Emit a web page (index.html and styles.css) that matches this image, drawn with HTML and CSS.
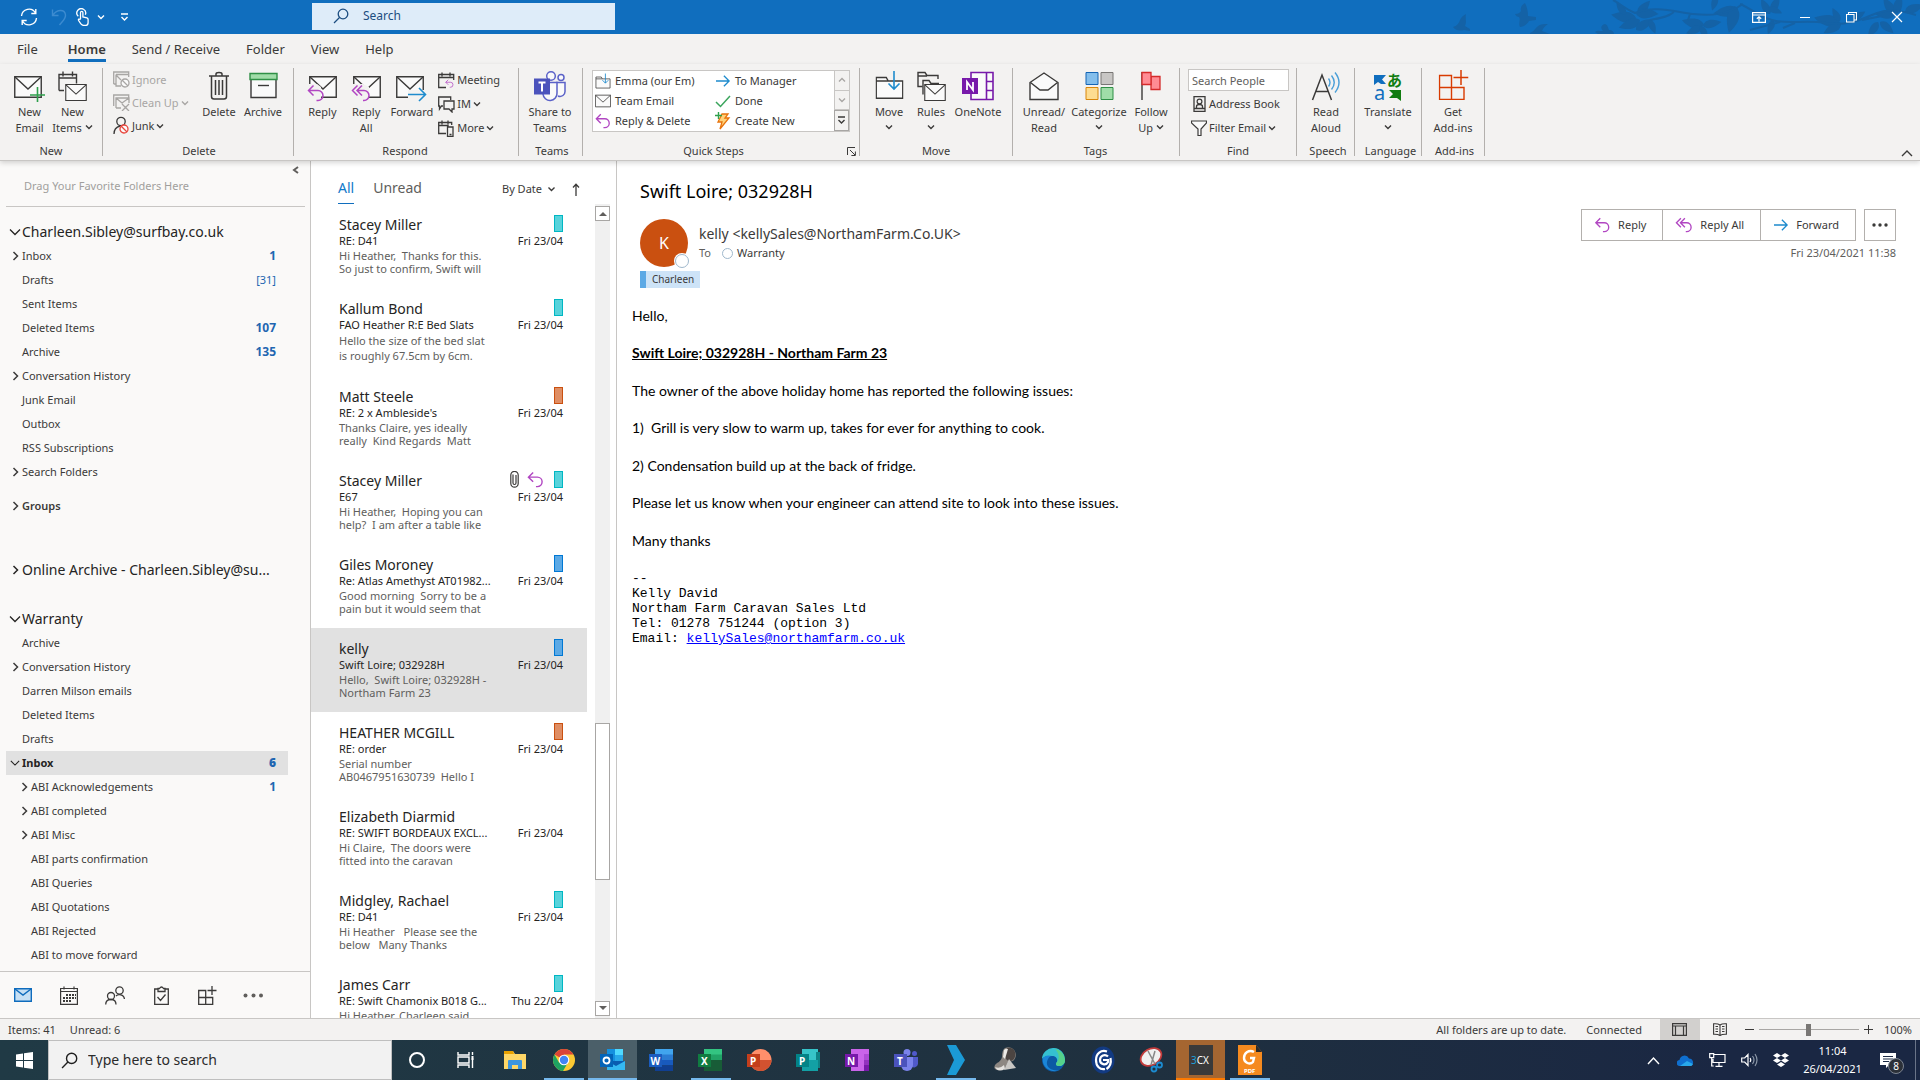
FILE: index.html
```html
<!DOCTYPE html>
<html lang="en">
<head>
<meta charset="utf-8">
<title>Warranty - Inbox</title>
<link rel="stylesheet" href="styles.css">
</head>
<body>
<svg class="defs" aria-hidden="true">
  <symbol id="down" viewBox="0 0 8 6"><path d="M1 1.5l3 3 3-3" fill="none" stroke="currentColor" stroke-width="1.4"/></symbol>
  <symbol id="right" viewBox="0 0 8 12"><path d="M1.5 2l4 4-4 4" fill="none" stroke="currentColor" stroke-width="1.5"/></symbol>
  <symbol id="open" viewBox="0 0 12 12"><path d="M1 3.5l5 5 5-5" fill="none" stroke="currentColor" stroke-width="1.3"/></symbol>
  <symbol id="reply" viewBox="0 0 18 18"><path d="M6.500 1.500l-5 5 5 5M1.500 6.500h9.500a5 5 0 0 1 0 10h-1.500" fill="none" stroke="#b146c2" stroke-width="1.5"/></symbol>
  <symbol id="replyall" viewBox="0 0 20 18"><path d="M6.500 1.500l-5 5 5 5M11 1.500l-5 5 5 5M6 6.500h7a5 5 0 0 1 0 10h-1" fill="none" stroke="#b146c2" stroke-width="1.5"/></symbol>
  <symbol id="fwd" viewBox="0 0 18 16"><path d="M1 8h15M10 2l6 6-6 6" fill="none" stroke="#1e8bcd" stroke-width="1.5"/></symbol>
  <symbol id="mag" viewBox="0 0 16 16"><path d="M1 15l5.500-5.500" fill="none" stroke="currentColor" stroke-width="1.3"/><circle cx="10" cy="6" r="4.800" fill="none" stroke="currentColor" stroke-width="1.300"/></symbol>
  <symbol id="folderdown" viewBox="0 0 28 30"><path d="M.75 28.250V7.500h10l2 3.500h14.500v17.250zM.75 11h12" fill="#fafafa" stroke="#3b3a39" stroke-width="1.400"/><path d="M18.500 1v18M13 13.500l5.500 5.500 5.500-5.500" fill="none" stroke="#1e8bcd" stroke-width="1.600"/></symbol>
  <symbol id="env" viewBox="0 0 28 22"><path d="M.75.75h26.500v20.500H.75z" fill="#fafafa" stroke="#3b3a39" stroke-width="1.400"/><path d="M1 1l13 12L27 1" fill="none" stroke="#3b3a39" stroke-width="1.400"/></symbol>
  <symbol id="no" viewBox="0 0 10 10"><circle cx="5" cy="5" r="4" fill="#fafafa" stroke="currentColor" stroke-width="1.300"/><path d="M2 2l6 6" stroke="currentColor" stroke-width="1.300"/></symbol>
  <symbol id="addins" viewBox="0 0 30 30"><path d="M1 5.500h12v24H1zM1 17.500h24.500v12H13v-12" fill="none" stroke="currentColor" stroke-width="1.400"/><path d="M22.500 0v15M15 7.500h15" stroke="currentColor" stroke-width="1.500"/></symbol>
  <defs><path id="leaf" d="M0 0C4-8 14-8 25 0 14 6 5 7 0 0z"/></defs>
</svg>

<header class="titlebar">
  <svg class="art" viewBox="0 0 470 34" aria-hidden="true">
    <path d="M3 27c4-1 6-4 7-7 1-3 4-5 6-6-1 4 1 8-1 12l5 3v2l-6-1c-4 1-8 1-11-3zM65 14c3 0 5-1 6-3-1-4 1-6 4-8 2 4 3 8 3 13l8 1v3l-7 1c-2 3-5 6-9 6-2-4 1-7-1-10-2 0-3-1-4-3zM80 33c3-1 4-3 6-5 3-4 7-4 12-4-3 2-5 4-6 7l8 3H80zM145 32c2-2 5-1 8-1-3-3-2-6 2-7 3 1 3 4 4 6 3 0 5 2 5 4h-16z"/>
    <use href="#leaf" transform="translate(186 18) rotate(188)"/>
    <use href="#leaf" transform="translate(190 20) rotate(160) scale(.9)"/>
    <use href="#leaf" transform="translate(176 14) rotate(230) scale(.6)"/>
    <use href="#leaf" transform="translate(188 15) rotate(-50) scale(.75)"/>
    <use href="#leaf" transform="translate(186 14) rotate(0) scale(.9)"/>
    <use href="#leaf" transform="translate(186 30) rotate(-32) scale(.8)"/>
    <use href="#leaf" transform="translate(199 20) rotate(65) scale(.6)"/>
    <use href="#leaf" transform="translate(254 25) rotate(192) scale(.9)"/>
    <use href="#leaf" transform="translate(252 26) rotate(155) scale(.7)"/>
    <use href="#leaf" transform="translate(250 26) rotate(60) scale(.6)"/>
    <use href="#leaf" transform="translate(253 26) rotate(-12) scale(.75)"/>
    <use href="#leaf" transform="translate(266 -4) rotate(105) scale(.6)"/>
    <use href="#leaf" transform="translate(288 9) rotate(170)"/>
    <use href="#leaf" transform="translate(285 6) rotate(103) scale(1.100)"/>
    <use href="#leaf" transform="translate(320 14) rotate(240) scale(.7)"/>
    <use href="#leaf" transform="translate(322 12) rotate(-65) scale(.7)"/>
    <use href="#leaf" transform="translate(318 8) rotate(20) scale(.6)"/>
    <use href="#leaf" transform="translate(323 20) rotate(110) scale(.6)"/>
    <use href="#leaf" transform="translate(390 22) rotate(190) scale(1.050)"/>
    <use href="#leaf" transform="translate(390 21) rotate(240) scale(.6)"/>
    <use href="#leaf" transform="translate(391 23) rotate(150) scale(.8)"/>
    <use href="#leaf" transform="translate(403 20) rotate(-35) scale(.6)"/>
    <use href="#leaf" transform="translate(428 22) rotate(125) scale(.7)"/>
    <use href="#leaf" transform="translate(430 22) rotate(40) scale(.7)"/>
    <use href="#leaf" transform="translate(445 14) rotate(235) scale(.8)"/>
    <use href="#leaf" transform="translate(446 14) rotate(-75) scale(.8)"/>
    <use href="#leaf" transform="translate(445 14) rotate(180) scale(.8)"/>
    <use href="#leaf" transform="translate(455 12) rotate(-20) scale(.8)"/>
    <path d="M163 0c8 4 12 9 22 13 20-8 40-1 58 1s34 1 50-10M240 14l-2 6M200 20c10-2 18-3 24-8M252 27v7M290 4c14 6 20 14 36 17s31-1 50 2 32-2 46-8 24-6 44 0M330 22l-30 8M345 23l-12 5M412 20l20-4" fill="none" stroke-width="2"/>
  </svg>
  <nav class="quick" aria-label="Quick access">
    <button class="q-sync" aria-label="Send and receive"><svg width="18" height="18" viewBox="0 0 18 18"><path d="M1.500 8a7.500 7.500 0 0 1 14-3M16.500 10a7.500 7.500 0 0 1-14 3M15.800 1v4.500h-4.500M2.200 17v-4.500h4.500" fill="none" stroke="#fff" stroke-width="1.400"/></svg></button>
    <button class="q-undo" aria-label="Undo"><svg width="16" height="18" viewBox="0 0 16 18"><path d="M1.500 1.500v6h6M2 7c4-6 12-6 12.500 0 .3 4-3 6-6 10" fill="none" stroke="#3c8bd0" stroke-width="1.400"/></svg></button>
    <button class="q-touch" aria-label="Touch mode"><svg width="13" height="18" viewBox="0 0 13 18"><path d="M4.500 11V4.500a1.200 1.200 0 0 1 2.400 0V9l4 .8c1 .3 1.200 1 1.200 1.800v2.800c0 1.500-1 3-2.500 3H7.500c-1.500 0-2-.6-2.800-1.700L2.600 12.500c-.7-1.300.7-2 1.900-.6M2.300 8.300A4.400 4.400 0 1 1 9.300 6.800" fill="none" stroke="#fff" stroke-width="1.300"/></svg></button>
    <button class="q-chev" aria-label="Touch options"><svg width="8" height="6"><use href="#down"/></svg></button>
    <button class="q-more" aria-label="Customise toolbar"><svg width="9" height="9" viewBox="0 0 9 9"><path d="M1 1h7M1.500 4l3 3 3-3" fill="none" stroke="#fff" stroke-width="1.400"/></svg></button>
  </nav>
  <label class="topsearch"><svg width="16" height="16"><use href="#mag"/></svg><input type="search" placeholder="Search" aria-label="Search"></label>
  <div class="winbtns">
    <button aria-label="Ribbon display"><svg width="14" height="11" viewBox="0 0 14 11"><path d="M.6.600h12.800v9.800H.6zM.6 3h12.800M7 9.500V4.800M4.800 6.800L7 4.800l2.200 2" fill="none" stroke="#fff" stroke-width="1.200"/></svg></button>
    <button aria-label="Minimise"><svg width="10" height="10" viewBox="0 0 10 10"><path d="M0 5.500h10" stroke="#fff"/></svg></button>
    <button aria-label="Restore"><svg width="11" height="11" viewBox="0 0 11 11"><path d="M.5 2.500h7.500v7.500H.5zM2.500 2.500v-2h8v7.500H8" fill="none" stroke="#fff" stroke-width="1.100"/></svg></button>
    <button aria-label="Close"><svg width="12" height="12" viewBox="0 0 12 12"><path d="M1 1l10 10M11 1L1 11" stroke="#fff" stroke-width="1.200"/></svg></button>
  </div>
</header>

<nav class="tabs" aria-label="Ribbon tabs">
  <a href="#">File</a><a href="#" class="on">Home</a><a href="#">Send / Receive</a><a href="#">Folder</a><a href="#">View</a><a href="#">Help</a>
</nav>

<div class="ribbon">
  <section class="group g-new"><div class="tools">
    <button class="big w43"><svg width="31" height="34" viewBox="0 0 31 34"><use href="#env" x="0" y="5" width="28" height="24"/><path d="M23.500 17v15M16 25h15" stroke="#2ea04c" stroke-width="1.600"/></svg><span>New<br>Email</span></button>
    <button class="big w43"><svg width="29" height="34" viewBox="0 0 29 34"><path d="M1 20.500V4.500h17.500v9M1 8h17M5 1.500v5M14.500 1.500v5M1 20.500h5" fill="none" stroke="#3b3a39" stroke-width="1.400"/><use href="#env" x="7" y="14" width="22" height="17"/></svg><span>New<br>Items <svg width="8" height="6"><use href="#down"/></svg></span></button>
  </div><h2>New</h2></section>

  <section class="group g-delete"><div class="tools">
    <div class="stack">
      <button class="small off"><svg width="17" height="17" viewBox="0 0 17 17"><path d="M.7 13V1h15v5M.7 13h3M3 3.500h12M3 3.500V15h5M3 4l5 5" fill="none" stroke="#a8a6a4" stroke-width="1.300"/><use href="#no" x="7" y="7" width="10" height="10"/></svg>Ignore</button>
      <button class="small off"><svg width="17" height="17" viewBox="0 0 17 17"><path d="M.7 12V1h15v3M3 14V4h13v5M3 4l6 5 7-5M3 14h5M9 10l7 7M16 10l-7 7" fill="none" stroke="#a8a6a4" stroke-width="1.300"/></svg>Clean Up <svg width="8" height="6"><use href="#down"/></svg></button>
      <button class="small"><svg width="17" height="19" viewBox="0 0 17 19"><circle cx="8" cy="5.500" r="4.200" fill="none" stroke="#3b3a39" stroke-width="1.300"/><path d="M1 18c0-5 2-7 6-8" fill="none" stroke="#3b3a39" stroke-width="1.300"/><use href="#no" x="6" y="8" width="10" height="10" color="#e8453c"/></svg>Junk <svg width="8" height="6"><use href="#down"/></svg></button>
    </div>
    <button class="big w44"><svg width="22" height="34" viewBox="0 0 22 34"><path d="M1 6h20M3.500 6v20.500q0 2.500 2.500 2.500h10q2.500 0 2.500-2.500V6M8 6V4q0-1.500 3-1.500T14 4v2M7.500 10v15M11 10v15M14.500 10v15" fill="none" stroke="#3b3a39" stroke-width="1.500"/></svg><span>Delete</span></button>
    <button class="big w44"><svg width="29" height="34" viewBox="0 0 29 34"><path d="M2 9h25v18.500H2z" fill="#fafafa" stroke="#3b3a39" stroke-width="1.400"/><path d="M1 3.500h27v6H1z" fill="#a0dca8" stroke="#2f8f46" stroke-width="1.400"/><path d="M9 15.500h11" stroke="#3b3a39" stroke-width="1.400"/></svg><span>Archive</span></button>
  </div><h2>Delete</h2></section>

  <section class="group g-respond"><div class="tools">
    <button class="big w46"><svg width="31" height="34" viewBox="0 0 31 34"><use href="#env" x="2" y="5" width="28" height="24"/><path d="M0 14h10l4 3v12H0z" fill="#f3f2f1"/><use href="#reply" x="0" y="14" width="18" height="18"/></svg><span>Reply</span></button>
    <button class="big w44"><svg width="31" height="34" viewBox="0 0 31 34"><use href="#env" x="2" y="5" width="28" height="24"/><path d="M0 14h12l6 3v12H0z" fill="#f3f2f1"/><use href="#replyall" x="0" y="14" width="20" height="18"/></svg><span>Reply<br>All</span></button>
    <button class="big w50"><svg width="31" height="34" viewBox="0 0 31 34"><use href="#env" x="0" y="5" width="28" height="24"/><path d="M12 20h18v10H12z" fill="#f3f2f1"/><path d="M12 24.500h17M23 18l6.500 6.500L23 31" fill="none" stroke="#1e8bcd" stroke-width="1.600"/></svg><span>Forward</span></button>
    <div class="stack loose">
      <button class="small"><svg width="17" height="17" viewBox="0 0 17 17"><path d="M8 15.500H.7V2.500h15V8M.7 5.500h15M4 .5v4M12 .5v4" fill="none" stroke="#3b3a39" stroke-width="1.300"/><use href="#reply" x="7" y="7" width="9" height="9"/></svg>Meeting</button>
      <button class="small"><svg width="17" height="17" viewBox="0 0 17 17"><path d="M5 10H3.500L1.500 13v-3H.7V1h12v3M6 5h10v8h-2v3l-3-3H6z" fill="none" stroke="#3b3a39" stroke-width="1.300"/></svg>IM <svg width="8" height="6"><use href="#down"/></svg></button>
      <button class="small"><svg width="17" height="17" viewBox="0 0 17 17"><path d="M8 13.500H.7V2.500h13V5M.7 5.500h10M4 .5v4M10 .5v4M9.500 7h5.500v9.500H9.500zM11.500 14.500h2" fill="none" stroke="#3b3a39" stroke-width="1.300"/></svg>More <svg width="8" height="6"><use href="#down"/></svg></button>
    </div>
  </div><h2>Respond</h2></section>

  <section class="group g-teams"><div class="tools">
    <button class="big w56"><svg width="32" height="34" viewBox="0 0 32 34"><g fill="#fafafa" stroke="#5b62c8" stroke-width="1.500"><path d="M22 12.500h9V21a5 5 0 0 1-7 5"/><path d="M9 12.500h14V23a7 7 0 0 1-14 1z"/><circle cx="17" cy="6" r="4.300"/><circle cx="27" cy="7.500" r="3"/></g><path d="M0 8.500h16v16H0z" fill="#4b53bc"/><path d="M4.500 12.500h7M8 12.500v9" stroke="#fff" stroke-width="2"/></svg><span>Share to<br>Teams</span></button>
  </div><h2>Teams</h2></section>

  <section class="group g-quick"><div class="tools">
    <div class="gallery">
      <div class="steps">
        <button><svg width="16" height="16"><use href="#folderdown"/></svg>Emma (our Em)</button>
        <button><svg width="16" height="14"><use href="#fwd"/></svg>To Manager</button>
        <button><svg width="16" height="14"><use href="#env"/></svg>Team Email</button>
        <button><svg width="16" height="14" viewBox="0 0 16 14"><path d="M1 8l4.500 4.500L15 2" fill="none" stroke="#3ba55d" stroke-width="1.500"/></svg>Done</button>
        <button><svg width="16" height="16"><use href="#reply"/></svg>Reply &amp; Delete</button>
        <button><svg width="16" height="18" viewBox="0 0 16 18"><path d="M7 2h6l-3 4h4L5 17l2-7H3z" fill="#ffd27a" stroke="#e8730c" stroke-width="1.300"/><path d="M3.500 0v7M0 3.500h7" stroke="#2ea04c" stroke-width="1.400"/></svg>Create New</button>
      </div>
      <div class="spin"><button aria-label="Previous row"><svg class="flip" width="8" height="6"><use href="#down"/></svg></button><button aria-label="Next row"><svg width="8" height="6"><use href="#down"/></svg></button><button class="strong" aria-label="More quick steps"><svg width="9" height="9" viewBox="0 0 9 9"><path d="M1 1h7M1.500 4l3 3 3-3" fill="none" stroke="currentColor" stroke-width="1.400"/></svg></button></div>
    </div>
  </div><h2>Quick Steps</h2><button class="launcher" aria-label="Manage quick steps"><svg width="9" height="9" viewBox="0 0 9 9"><path d="M.5 8V.5H8M3 3l5 5M8.400 4.500v4h-4" fill="none" stroke="#3b3a39"/></svg></button></section>

  <section class="group g-move"><div class="tools">
    <button class="big w42"><svg width="29" height="34" viewBox="0 0 28 34"><use href="#folderdown" x="0" y="0" width="28" height="30"/></svg><span>Move<br><svg width="8" height="6"><use href="#down"/></svg></span></button>
    <button class="big w42"><svg width="29" height="34" viewBox="0 0 29 34"><path d="M5.500 16.500H1V2.500h7l2 3h11V9M1 6h9" fill="none" stroke="#3b3a39" stroke-width="1.400"/><path d="M6 24.500V10.500h6l2 3h8" fill="none" stroke="#3b3a39" stroke-width="1.400"/><use href="#env" x="7" y="14" width="22" height="17"/></svg><span>Rules<br><svg width="8" height="6"><use href="#down"/></svg></span></button>
    <button class="big w52"><svg width="32" height="34" viewBox="0 0 32 34"><path d="M9 2.500h22v27H9zM24.500 11.500H31M24.500 2.500v27M24.500 20.500H31" fill="#fafafa" stroke="#7719aa" stroke-width="1.600"/><path d="M0 8h16v16H0z" fill="#7719aa"/><path d="M5 20v-8l6 8v-8" fill="none" stroke="#fff" stroke-width="1.800"/></svg><span>OneNote</span></button>
  </div><h2>Move</h2></section>

  <section class="group g-tags"><div class="tools">
    <button class="big w48"><svg width="30" height="34" viewBox="0 0 30 34"><path d="M1 12.500L15 3l14 9.500v17H1z" fill="#fafafa" stroke="#3b3a39" stroke-width="1.400"/><path d="M1.500 12.500L11 20h8l9.500-7.500" fill="none" stroke="#3b3a39" stroke-width="1.400"/></svg><span>Unread/<br>Read</span></button>
    <button class="big w62"><svg width="29" height="34" viewBox="0 0 29 34"><path d="M1 2.500h12v12H1z" fill="#83beec" stroke="#1464b4"/><path d="M16 2.500h12v12H16z" fill="#c8c6c4" stroke="#797775"/><path d="M1 17.500h12v12H1z" fill="#fddc91" stroke="#d8860b"/><path d="M16 17.500h12v12H16z" fill="#a0dda8" stroke="#2f8f46"/></svg><span>Categorize<br><svg width="8" height="6"><use href="#down"/></svg></span></button>
    <button class="big w42"><svg width="20" height="34" viewBox="0 0 20 34"><path d="M1 2v28" stroke="#3b3a39" stroke-width="1.400"/><path d="M10 6.500h9v13h-9z" fill="#ff8c94" stroke="#d52b2b" stroke-width="1.300"/><path d="M1 2.500h9v12H1z" fill="#ff8c94" stroke="#d52b2b" stroke-width="1.300"/></svg><span>Follow<br>Up <svg width="8" height="6"><use href="#down"/></svg></span></button>
  </div><h2>Tags</h2></section>

  <section class="group g-find"><div class="tools find">
      <input type="text" placeholder="Search People" aria-label="Search people">
      <button class="small"><svg width="16" height="16" viewBox="0 0 16 16"><path d="M3 .7h11v14.600H3zM3 12.500h11M5.500 12v-1.500c0-1.500 1.500-2 3-2s3 .5 3 2V12" fill="none" stroke="#3b3a39" stroke-width="1.300"/><circle cx="8.500" cy="5.500" r="2.400" fill="none" stroke="#3b3a39" stroke-width="1.200"/></svg>Address Book</button>
      <button class="small"><svg width="16" height="16" viewBox="0 0 16 16"><path d="M.5 1h15v2L10 9v6.500H7V9L.5 3z" fill="#fafafa" stroke="#3b3a39" stroke-width="1.200"/></svg>Filter Email <svg width="8" height="6"><use href="#down"/></svg></button>
  </div><h2>Find</h2></section>

  <section class="group g-speech"><div class="tools">
    <button class="big w48"><svg width="30" height="34" viewBox="0 0 30 34"><path d="M1.500 30L11 5l9.500 25M5 21.500h12" fill="none" stroke="#3b3a39" stroke-width="1.500"/><path d="M17.500 8.500q3 4 0 8M20.500 5.500q5.500 7 0 14M24 2.500q8 10 0 20" fill="none" stroke="#4a9fd8" stroke-width="1.400"/></svg><span>Read<br>Aloud</span></button>
  </div><h2>Speech</h2></section>

  <section class="group g-lang"><div class="tools">
    <button class="big w56"><svg class="spill" width="30" height="34" viewBox="0 0 30 34"><path d="M1 5h12l-4 4.500L13 14H8l-3-2-4 3z" fill="#106ebe"/><path d="M28 20v11l-4-3h-8l4-4-4-4z" fill="#107c10"/><text x="1" y="30" font-size="20" fill="#106ebe" class="glyph">a</text><text x="14" y="16" font-size="15" fill="#107c10" class="glyph heavy">あ</text></svg><span>Translate<br><svg width="8" height="6"><use href="#down"/></svg></span></button>
  </div><h2>Language</h2></section>

  <section class="group g-add"><div class="tools">
    <button class="big w56"><svg class="orange" width="31" height="34" viewBox="0 0 30 34"><use href="#addins" x="0" y="0" width="30" height="30"/></svg><span>Get<br>Add-ins</span></button>
  </div><h2>Add-ins</h2></section>
  <button class="collapse" aria-label="Collapse ribbon"><svg width="12" height="8" viewBox="0 0 12 8"><path d="M1 7l5-5 5 5" fill="none" stroke="#3b3a39" stroke-width="1.400"/></svg></button>
</div>

<main class="main">
  <aside class="side">
    <div class="fav"><button aria-label="Minimise folder pane"><svg width="7" height="8" viewBox="0 0 7 8"><path d="M6 1L2 4l4 3" fill="none" stroke="#605e5c" stroke-width="2"/></svg></button><p>Drag Your Favorite Folders Here</p></div>
    <nav class="tree" aria-label="Folders">
      <a href="#" class="acct"><svg width="12" height="12"><use href="#open"/></svg>Charleen.Sibley@surfbay.co.uk</a>
      <a href="#"><svg width="8" height="12"><use href="#right"/></svg>Inbox<b>1</b></a>
      <a href="#">Drafts<i>[31]</i></a>
      <a href="#">Sent Items</a>
      <a href="#">Deleted Items<b>107</b></a>
      <a href="#">Archive<b>135</b></a>
      <a href="#"><svg width="8" height="12"><use href="#right"/></svg>Conversation History</a>
      <a href="#">Junk Email</a>
      <a href="#">Outbox</a>
      <a href="#">RSS Subscriptions</a>
      <a href="#"><svg width="8" height="12"><use href="#right"/></svg>Search Folders</a>
      <a href="#" class="groups"><svg width="8" height="12"><use href="#right"/></svg>Groups</a>
      <a href="#" class="acct archive"><svg width="8" height="12"><use href="#right"/></svg>Online Archive - Charleen.Sibley@su...</a>
      <a href="#" class="acct"><svg width="12" height="12"><use href="#open"/></svg>Warranty</a>
      <a href="#">Archive</a>
      <a href="#"><svg width="8" height="12"><use href="#right"/></svg>Conversation History</a>
      <a href="#">Darren Milson emails</a>
      <a href="#">Deleted Items</a>
      <a href="#">Drafts</a>
      <a href="#" class="sel"><svg width="10" height="12"><use href="#open"/></svg>Inbox<b>6</b></a>
      <a href="#" class="sub"><svg width="8" height="12"><use href="#right"/></svg>ABI Acknowledgements<b>1</b></a>
      <a href="#" class="sub"><svg width="8" height="12"><use href="#right"/></svg>ABI completed</a>
      <a href="#" class="sub"><svg width="8" height="12"><use href="#right"/></svg>ABI Misc</a>
      <a href="#" class="sub">ABI parts confirmation</a>
      <a href="#" class="sub">ABI Queries</a>
      <a href="#" class="sub">ABI Quotations</a>
      <a href="#" class="sub">ABI Rejected</a>
      <a href="#" class="sub">ABI to move forward</a>
    </nav>
    <nav class="modules" aria-label="Modules">
      <button aria-label="Mail"><svg width="18" height="14" viewBox="0 0 18 14"><path d="M.7.700h16.600v12.600H.7z" fill="#c7e0f4" stroke="#0f6cbd" stroke-width="1.400"/><path d="M1 1l8 6 8-6" fill="none" stroke="#0f6cbd" stroke-width="1.400"/></svg></button>
      <button aria-label="Calendar"><svg width="18" height="19" viewBox="0 0 18 19"><path d="M.6 2.500h16.800v15.900H.6zM.6 5.500h16.800M4 .5v3M14 .5v3" fill="none" stroke="#3b3a39" stroke-width="1.200"/><path d="M6 9h10M3 12h13M3 15h9" stroke="#3b3a39" stroke-width="2" stroke-dasharray="2 1"/></svg></button>
      <button aria-label="People"><svg width="20" height="19" viewBox="0 0 20 19"><g fill="none" stroke="#3b3a39" stroke-width="1.300"><circle cx="6" cy="10" r="3.500"/><path d="M.7 18.500c0-3 2-5 5.300-5s5 2 5 5"/><circle cx="14.500" cy="4.500" r="3.700"/><path d="M11 10c2-2.300 8-2 8.400 3"/></g></svg></button>
      <button aria-label="Tasks"><svg width="15" height="19" viewBox="0 0 15 19"><path d="M4 3H.7v15.300h13.600V3H11M4 2.500h1.500q2-3 4 0H11v3H4zM3.500 11l3 3.500 5-6" fill="none" stroke="#3b3a39" stroke-width="1.300"/></svg></button>
      <button aria-label="Add-ins"><svg width="19" height="19" viewBox="0 0 19 19"><path d="M.7 4.500h7v14h-7zM.7 11.500h14v7h-7v-7M14 0v9M9.500 4.500h9" fill="none" stroke="#3b3a39" stroke-width="1.300"/></svg></button>
      <button aria-label="More"><svg width="20" height="5" viewBox="0 0 20 5"><g fill="#605e5c"><circle cx="2.500" cy="2.500" r="2"/><circle cx="10.500" cy="2.500" r="2"/><circle cx="18" cy="2.500" r="2"/></g></svg></button>
    </nav>
  </aside>

  <section class="list">
    <div class="filters"><a href="#" class="on">All</a><a href="#">Unread</a><button class="by">By Date<svg width="9" height="6" viewBox="0 0 8 6"><use href="#down"/></svg></button><button class="dir" aria-label="Reverse order"><svg width="8" height="13" viewBox="0 0 8 13"><path d="M4 13V1M1 4.500L4 1.200l3 3.300" fill="none" stroke="#3b3a39" stroke-width="1.300"/></svg></button></div>
    <div class="scroller">
    <ul>
      <li><h3>Stacey Miller</h3><span class="cat teal"></span><p class="subj">RE: D41</p><time>Fri 23/04</time><p class="prev">Hi Heather,  Thanks for this.
So just to confirm, Swift will</p></li>
      <li class="tall"><h3>Kallum Bond</h3><span class="cat teal"></span><p class="subj">FAO Heather R:E Bed Slats</p><time>Fri 23/04</time><p class="prev">Hello the size of the bed slat
is roughly 67.5cm by 6cm.</p></li>
      <li><h3>Matt Steele</h3><span class="cat rust"></span><p class="subj">RE: 2 x Ambleside's</p><time>Fri 23/04</time><p class="prev">Thanks Claire, yes ideally
really  Kind Regards  Matt</p></li>
      <li><h3>Stacey Miller</h3><span class="marks"><svg width="9" height="17" viewBox="0 0 9 17"><path d="M6 4v8a1.500 1.500 0 0 1-3 0V4.500a3 3 0 0 1 .2-1M.8 4v8.500a3.700 3.700 0 0 0 7.400 0V4a3.200 3.200 0 0 0-7.400 0" fill="none" stroke="#3b3a39" stroke-width="1.200"/></svg><svg width="17" height="17"><use href="#reply"/></svg></span><span class="cat teal"></span><p class="subj">E67</p><time>Fri 23/04</time><p class="prev">Hi Heather,  Hoping you can
help?  I am after a table like</p></li>
      <li><h3>Giles Moroney</h3><span class="cat blue"></span><p class="subj">Re: Atlas Amethyst AT01982...</p><time>Fri 23/04</time><p class="prev">Good morning  Sorry to be a
pain but it would seem that</p></li>
      <li class="sel"><h3>kelly</h3><span class="cat blue"></span><p class="subj">Swift Loire; 032928H</p><time>Fri 23/04</time><p class="prev">Hello,  Swift Loire; 032928H -
Northam Farm 23</p></li>
      <li><h3>HEATHER MCGILL</h3><span class="cat rust"></span><p class="subj">RE: order</p><time>Fri 23/04</time><p class="prev">Serial number
AB0467951630739  Hello I</p></li>
      <li><h3>Elizabeth Diarmid</h3><p class="subj">RE: SWIFT BORDEAUX EXCL...</p><time>Fri 23/04</time><p class="prev">Hi Claire,  The doors were
fitted into the caravan</p></li>
      <li><h3>Midgley, Rachael</h3><span class="cat teal"></span><p class="subj">RE: D41</p><time>Fri 23/04</time><p class="prev">Hi Heather   Please see the
below   Many Thanks</p></li>
      <li><h3>James Carr</h3><span class="cat teal"></span><p class="subj">RE: Swift Chamonix B018 G...</p><time>Thu 22/04</time><p class="prev">Hi Heather, Charleen said
</p></li>
    </ul>
    <div class="bar"><button aria-label="Scroll up"><svg width="8" height="5" viewBox="0 0 8 5"><path d="M0 5l4-4 4 4z" fill="#605e5c"/></svg></button><div class="track"><span class="thumb"></span></div><button aria-label="Scroll down"><svg width="8" height="5" viewBox="0 0 8 5"><path d="M0 0l4 4 4-4z" fill="#605e5c"/></svg></button></div>
    </div>
  </section>

  <article class="read">
    <h1>Swift Loire; 032928H</h1>
    <div class="meta">
      <div class="avatar">K<span class="presence"></span></div>
      <div class="who"><p class="from">kelly &lt;kellySales@NorthamFarm.Co.UK&gt;</p><p class="to"><span>To</span><i class="dot"></i>Warranty</p></div>
      <div class="actions">
        <div class="btns"><button><svg width="17" height="16"><use href="#reply"/></svg>Reply</button><button><svg width="18" height="16"><use href="#replyall"/></svg>Reply All</button><button><svg width="16" height="14"><use href="#fwd"/></svg>Forward</button><button class="more" aria-label="More actions"><svg width="16" height="4" viewBox="0 0 16 4"><g fill="#3b3a39"><circle cx="2" cy="2" r="1.700"/><circle cx="8" cy="2" r="1.700"/><circle cx="14" cy="2" r="1.700"/></g></svg></button></div>
        <time>Fri 23/04/2021 11:38</time>
      </div>
    </div>
    <p class="tag">Charleen</p>
    <div class="body">
      <p>Hello,</p>
      <p><strong>Swift Loire; 032928H - Northam Farm 23</strong></p>
      <p>The owner of the above holiday home has reported the following issues:</p>
      <p>1)&nbsp; Grill is very slow to warm up, takes for ever for anything to cook.</p>
      <p>2) Condensation build up at the back of fridge.</p>
      <p>Please let us know when your engineer can attend site to look into these issues.</p>
      <p>Many thanks</p>
    </div>
    <div class="sig">--<br>Kelly David<br>Northam Farm Caravan Sales Ltd<br>Tel: 01278 751244 (option 3)<br>Email: <a href="#">kellySales@northamfarm.co.uk</a></div>
  </article>
</main>

<footer class="status">
  <span>Items: 41</span><span>Unread: 6</span>
  <span class="push">All folders are up to date.</span><span>Connected</span>
  <button class="view on" aria-label="Normal view"><svg width="15" height="13" viewBox="0 0 15 13"><path d="M.6.600h13.800v11.800H.6zM.6 3h13.800M3.500 3v9.400M11.500 3v9.400" fill="none" stroke="#3b3a39" stroke-width="1.200"/></svg></button>
  <button class="view" aria-label="Reading view"><svg width="14" height="13" viewBox="0 0 14 13"><path d="M7 2Q5 .5.6.8v10.400Q5 11 7 12.500q2-1.500 6.400-1.300V.8Q9 .5 7 2zv10M2.500 3.500h2.500M2.500 6h2.500M2.500 8.500h2.500M9 3.500h2.500M9 6h2.500M9 8.500h2.500" fill="none" stroke="#3b3a39" stroke-width="1.100"/></svg></button>
  <button class="zoomb" aria-label="Zoom out"><svg width="9" height="9" viewBox="0 0 9 9"><path d="M0 4.500h9" stroke="#3b3a39"/></svg></button>
  <input type="range" min="0" max="100" value="50" aria-label="Zoom">
  <button class="zoomb" aria-label="Zoom in"><svg width="9" height="9" viewBox="0 0 9 9"><path d="M0 4.500h9M4.500 0v9" stroke="#3b3a39"/></svg></button>
  <span class="pct">100%</span>
</footer>

<nav class="taskbar" aria-label="Taskbar">
  <button class="start" aria-label="Start"><svg width="17" height="17" viewBox="0 0 17 17"><path d="M0 2.500l7-1v6.500H0zM8 1.300L17 0v8H8zM0 9h7v6.500l-7-1zM8 9h9v8l-9-1.300z" fill="#fff"/></svg></button>
  <label class="tsearch"><svg width="17" height="17"><use href="#mag"/></svg><input type="search" placeholder="Type here to search" aria-label="Type here to search"></label>
  <div class="apps">
    <button aria-label="Cortana"><svg width="18" height="18" viewBox="0 0 18 18"><circle cx="9" cy="9" r="7" fill="none" stroke="#fff" stroke-width="2"/></svg></button>
    <button aria-label="Task view"><svg width="18" height="16" viewBox="0 0 18 16"><path d="M1 0v3h11V0M1 5h11v6H1zM1 16v-3h11v3M15.500 0v3M15.500 6v10" fill="none" stroke="#fff" stroke-width="1.400"/><path d="M14.500 4h2v4h-2z" fill="#fff"/></svg></button>
    <button aria-label="File Explorer"><svg width="22" height="20" viewBox="0 0 22 20"><path d="M0 1h9l2 3h11v15H0z" fill="#ffd767"/><path d="M0 1h9l1 3H0z" fill="#e9a100"/><path d="M4 19v-8q0-1 1-1h12q1 0 1 1v8h-4v-4H8v4z" fill="#3d95de"/></svg></button>
    <button class="run" aria-label="Chrome"><svg width="24" height="24" viewBox="0 0 24 24"><circle cx="12" cy="12" r="11" fill="#fbc933"/><path d="M12 12L2.500 6.500A11 11 0 0 1 21.500 6.500H12z" fill="#db4437"/><path d="M2.500 6.500A11 11 0 0 0 11 23l5-8.500H7z" fill="#1ea362"/><circle cx="12" cy="12" r="5.300" fill="#fff"/><circle cx="12" cy="12" r="4.200" fill="#4285f4"/></svg></button>
    <button class="run active" aria-label="Outlook"><svg width="25" height="22" viewBox="0 0 25 22"><path d="M7 0h16v12H7z" fill="#1490df"/><path d="M15 0h8v6h-8z" fill="#50d9ff"/><path d="M15 6h8v6h-8z" fill="#28a8ea"/><path d="M7 12h18v9H7z" fill="#0a5cb0"/><path d="M7 12l9 5 9-5v9H7z" fill="#35b8f1"/><path d="M0 5h13v13H0z" fill="#0364b8"/><circle cx="6.500" cy="11.500" r="3" fill="none" stroke="#fff" stroke-width="1.800"/></svg></button>
    <button aria-label="Word"><svg width="25" height="22" viewBox="0 0 25 22"><path d="M6 0h18v6H6z" fill="#41a5ee"/><path d="M6 5.500h18V11H6z" fill="#2b7cd3"/><path d="M6 11h18v5.500H6z" fill="#185abd"/><path d="M6 16.500h18V22H6z" fill="#103f91"/><path d="M0 5h13v13H0z" fill="#1b5cbe"/><text x="1.500" y="15.500" class="tile">W</text></svg></button>
    <button class="run" aria-label="Excel"><svg width="25" height="22" viewBox="0 0 25 22"><path d="M6 0h18v6H6z" fill="#33c481"/><path d="M6 5.500h18V11H6z" fill="#21a366"/><path d="M6 11h18v11H6z" fill="#185c37"/><path d="M0 5h13v13H0z" fill="#107c41"/><text x="3" y="15.500" class="tile">X</text></svg></button>
    <button aria-label="PowerPoint"><svg width="25" height="22" viewBox="0 0 25 22"><circle cx="13.500" cy="11" r="11" fill="#ff8f6b"/><path d="M2.500 11h22a11 11 0 0 1-22 0z" fill="#d35230"/><path d="M0 5h13v13H0z" fill="#c43e1c"/><text x="3" y="15.500" class="tile">P</text></svg></button>
    <button aria-label="Publisher"><svg width="25" height="22" viewBox="0 0 25 22"><path d="M6 0h16v11H6z" fill="#36c4c9"/><path d="M20 3h4v16h-4z" fill="#0d8387"/><path d="M6 11h16v11H6z" fill="#13a0a5"/><path d="M0 5h13v13H0z" fill="#038387"/><text x="3" y="15.500" class="tile">P</text></svg></button>
    <button aria-label="OneNote"><svg width="25" height="22" viewBox="0 0 25 22"><path d="M6 0h18v22H6z" fill="#ca64ea"/><path d="M19 5h5v6h-5z" fill="#ae4bd5"/><path d="M19 11h5v5h-5z" fill="#9332bf"/><path d="M19 16h5v6h-5z" fill="#7719aa"/><path d="M0 5h13v13H0z" fill="#7719aa"/><text x="2" y="15.500" class="tile">N</text></svg></button>
    <button aria-label="Teams"><svg width="25" height="22" viewBox="0 0 25 22"><circle cx="13" cy="3.500" r="3.500" fill="#7b83eb"/><circle cx="20.500" cy="4.500" r="2.500" fill="#5059c9"/><path d="M17 8h7v7a4 4 0 0 1-7 2z" fill="#5059c9"/><path d="M7 8h12v8a6 6 0 0 1-12 0z" fill="#7b83eb"/><path d="M0 5h13v13H0z" fill="#4b53bc"/><text x="3" y="15.500" class="tile">T</text></svg></button>
    <button class="run" aria-label="Remote"><svg width="18" height="30" viewBox="0 0 18 30"><path d="M0 0h9l9 15-9 15H0l7-15z" fill="#1b9ad6"/></svg></button>
    <button aria-label="Caller"><svg width="24" height="26" viewBox="0 0 24 26"><path d="M12 1q6-2 9 2c3 4 2 8-1 11l-5 1-3 6q-6 4-10 1-2-3 2-6 4-2 5-6 0-7 3-9z" fill="#8d8782"/><path d="M14 1q6-1 8 4c1 5-1 8-4 9-4 0-6-2-6-6z" fill="#4c4542"/><path d="M11 3q2-2 4-1l-3 10-2-2z" fill="#eceae6"/><path d="M16 12l7 9-12 2z" fill="#c9c7c4"/><path d="M2 20q5 2 9-2l1 4q-7 4-10-2z" fill="#e4e2df"/></svg></button>
    <button aria-label="Edge"><svg width="25" height="24" viewBox="0 0 25 24"><circle cx="12.500" cy="12" r="11.500" fill="#0c59a4"/><path d="M1 11a11.500 11.500 0 0 1 23 1c0 4-3 6-6 6-3 0-4-2-2-4 1-3-1-6-5-6-5 0-9 1-10 3z" fill="#35c1d0"/><path d="M14 1a11.500 11.500 0 0 1 10 11c0 4-3 6-6 6-3 0-4-2-2-4 3-4 2-9-2-13z" fill="#56d18a"/><path d="M7 11c-4 7 3 13 12 11-9 4-19-3-17-12 2-3 6-3 9-2-2 0-3 1-4 3z" fill="#1b86d8"/></svg></button>
    <button aria-label="Connect"><svg width="24" height="28" viewBox="0 0 24 28"><ellipse cx="12" cy="14" rx="11.500" ry="13.500" fill="#123a82"/><path d="M16 5.500c-6-2-11 2-11 8.500s4 10 9 9M17 10.500c-3-3-8-1-8 3.500s6 6 8 2v-2h-5M19.500 12c1 5-1 9-4 11" fill="none" stroke="#fff" stroke-width="2.200"/></svg></button>
    <button aria-label="Snipping Tool"><svg width="25" height="26" viewBox="0 0 25 26"><ellipse cx="12" cy="10" rx="11" ry="8" transform="rotate(-30 12 10)" fill="#f0f0f0" stroke="#c33b3b" stroke-width="1.800"/><path d="M9 4l7 13M16 4l-4 14" stroke="#888" stroke-width="1.500"/><g fill="none" stroke="#1c8bd0" stroke-width="1.800"><circle cx="15" cy="22" r="2.500"/><circle cx="20.500" cy="18" r="2.500"/></g></svg></button>
    <button class="cx" aria-label="3CX"><svg width="24" height="30" viewBox="0 0 24 30"><path d="M0 0h24v30H0z" fill="#3a3a3a"/><text x="2" y="18.500" class="cxt"><tspan fill="#1da0dc">3</tspan>CX</text></svg></button>
    <button class="run" aria-label="PDF Editor"><svg width="24" height="30" viewBox="0 0 24 30"><path d="M0 0h18l6 7v23H0z" fill="#f58a1f"/><path d="M18 0v7h6z" fill="#2b2b2b"/><path d="M16 7c-5-3-10 1-10 6s6 7 9 4l1-4h-4" fill="none" stroke="#fff" stroke-width="2.400"/><text x="6" y="28" class="pdf">PDF</text></svg></button>
  </div>
  <div class="tray">
    <button aria-label="Show hidden icons"><svg width="13" height="9" viewBox="0 0 13 9"><path d="M1 8l5.500-6L12 8" fill="none" stroke="#fff" stroke-width="1.400"/></svg></button>
    <button aria-label="OneDrive"><svg width="17" height="11" viewBox="0 0 17 11"><path d="M3 11a3 3 0 0 1-.5-6A5 5 0 0 1 12 3.500a4 4 0 0 1 2 7.500z" fill="#0f6fcf"/><path d="M3 11l7-5 6 3q-1 2-2 2z" fill="#28a8ea"/></svg></button>
    <button aria-label="Network"><svg width="17" height="14" viewBox="0 0 17 14"><path d="M5 1.500h11v8H4V6M10 10v3M6.500 13.300h7M.7.700h4v4h-4zM2.700 5v8h2" fill="none" stroke="#fff" stroke-width="1.200"/></svg></button>
    <button aria-label="Volume"><svg width="17" height="14" viewBox="0 0 17 14"><path d="M.7 5h3L7 1.500v11L3.700 9h-3zM9 5q1.500 2 0 4" fill="none" stroke="#fff" stroke-width="1.200"/><path d="M11.500 3q3 4 0 8M14 1q4 6 0 12" fill="none" stroke="#8c98a8" stroke-width="1.200"/></svg></button>
    <button aria-label="Dropbox"><svg width="16" height="14" viewBox="0 0 16 14"><path d="M4 0l4 2.500L4 5 0 2.500zM12 0l4 2.500L12 5 8 2.500zM4 5l4 2.500L4 10 0 7.500zM12 5l4 2.500-4 2.500-4-2.500zM8 9l4 2.500L8 14l-4-2.500z" fill="#fff"/></svg></button>
    <time>11:04<br>26/04/2021</time>
    <button class="note" aria-label="Notifications"><svg width="16" height="15" viewBox="0 0 16 15"><path d="M0 0h16v12H9l-3 3v-3H0z" fill="#fff"/><path d="M3 3.500h10M3 6h10M3 8.500h6" stroke="#1b2a45"/></svg><span class="badge">8</span></button>
    <span class="desk"></span>
  </div>
</nav>
</body>
</html>
```
FILE: styles.css
```css
* { box-sizing: border-box; }
html, body { height: 100%; }
body {
  margin: 0;
  display: flex;
  flex-direction: column;
  overflow: hidden;
  background: #fff;
  color: #3b3a39;
  font: 11px/16px "Noto Sans", "Noto Sans CJK JP", sans-serif;
}
h1, h2, h3, p, ul { margin: 0; padding: 0; font-weight: 400; }
ul { list-style: none; }
a { color: inherit; text-decoration: none; }
button { border: 0; padding: 0; background: none; color: inherit; font: inherit; }
input { font: inherit; color: inherit; outline: 0; min-width: 0; }
svg { flex: none; }
.defs { position: absolute; width: 0; height: 0; }

/* Title bar */
.titlebar {
  position: relative;
  flex: none;
  height: 34px;
  display: flex;
  align-items: center;
  background: #106ebe;
  color: #fff;
}
.art { position: absolute; right: 0; top: 0; width: 470px; height: 34px; fill: #1462a6; stroke: #1462a6; stroke-width: 0; }
.quick { width: 312px; display: flex; align-items: center; padding-left: 20px; }
.quick button { display: flex; }
.q-undo { margin-left: 13px; }
.q-touch { margin-left: 9px; }
.q-chev { margin-left: 8px; }
.q-more { margin-left: 15px; }
.topsearch {
  width: 303px;
  height: 27px;
  display: flex;
  align-items: center;
  gap: 14px;
  padding-left: 21px;
  margin-bottom: 2px;
  background: #deecf9;
  color: #1c4d80;
}
.topsearch input { flex: 1; border: 0; background: none; font-size: 12px; padding: 0; }
.topsearch input::placeholder { color: #1c4d80; opacity: 1; }
.winbtns { position: relative; margin-left: auto; display: flex; }
.winbtns button { width: 46px; height: 32px; display: grid; place-items: center; }

/* Tabs */
.tabs {
  flex: none;
  height: 30px;
  display: flex;
  gap: 26px;
  padding-left: 17px;
  background: #f3f2f1;
  font-size: 13px;
  line-height: 31px;
}
.tabs a { height: 28px; }
.tabs a:first-child { margin-right: 4px; }
.tabs .on { font-weight: 600; border-bottom: 3px solid #106ebe; }

/* Ribbon */
.ribbon {
  position: relative;
  z-index: 1;
  flex: none;
  height: 97px;
  display: flex;
  padding-top: 4px;
  background: #f3f2f1;
  border-bottom: 1px solid #c8c6c4;
  box-shadow: 0 2px 5px rgba(0, 0, 0, .16);
}
.group {
  position: relative;
  height: 88px;
  display: flex;
  flex-direction: column;
  border-right: 1px solid #b3b0ad;
}
.group h2 { font-size: 11px; line-height: 10px; text-align: center; }
.tools { flex: none; height: 78px; display: flex; align-items: flex-start; }
.g-new { width: 103px; padding-left: 8px; }
.g-delete { width: 191px; padding-left: 10px; }
.g-respond { width: 225px; padding-left: 6px; }
.g-teams { width: 64px; padding-left: 3px; }
.g-quick { width: 277px; padding-left: 9px; }
.g-move { width: 153px; padding-left: 8px; }
.g-tags { width: 167px; padding-left: 7px; }
.g-find { width: 117px; padding-left: 8px; }
.g-speech { width: 58px; padding-left: 5px; }
.g-lang { width: 67px; padding-left: 5px; }
.g-add { width: 63px; padding-left: 3px; }
.g-new h2, .g-delete h2, .g-respond h2, .g-move h2, .g-tags h2, .g-find h2 { padding-right: 8px; }
.g-quick h2 { padding-right: 24px; }
.big {
  display: flex;
  flex-direction: column;
  align-items: center;
  padding-top: 2px;
  white-space: nowrap;
}
.big > span { line-height: 16px; }
.big span svg { vertical-align: 2px; }
.w42 { width: 42px; }
.w43 { width: 43px; }
.w44 { width: 44px; }
.w46 { width: 46px; }
.w48 { width: 48px; }
.w50 { width: 50px; }
.w52 { width: 52px; }
.w56 { width: 56px; }
.w62 { width: 62px; }
.stack { width: 84px; display: flex; flex-direction: column; }
.stack.loose { padding-left: 2px; }
.small { height: 23px; display: flex; align-items: center; gap: 2px; white-space: nowrap; }
.stack.loose .small { height: 24px; }
.off { color: #a8a6a4; }
.gallery {
  width: 258px;
  height: 62px;
  margin-top: 2px;
  display: flex;
  background: #fff;
  border: 1px solid #c8c6c4;
}
.steps { flex: 1; display: grid; grid-template-columns: 120px 1fr; grid-template-rows: repeat(3, 20px); padding-left: 2px; }
.steps button { display: flex; align-items: center; gap: 4px; white-space: nowrap; }
.spin { width: 15px; display: flex; flex-direction: column; color: #a8a6a4; background: #f3f2f1; }
.spin button { flex: 1; display: grid; place-items: center; border-left: 1px solid #c8c6c4; border-bottom: 1px solid #c8c6c4; }
.spin .strong { color: #3b3a39; border: 1px solid #a8a6a4; }
.flip { transform: rotate(180deg); }
.launcher { position: absolute; right: 3px; bottom: 0; display: flex; }
.find { flex-direction: column; }
.find input { width: 101px; height: 22px; margin: 1px 0; border: 1px solid #c8c6c4; background: #fff; padding: 0 3px; }
.find input::placeholder { color: #605e5c; opacity: 1; }
.find .small { height: 24px; padding-left: 3px; }
.orange { color: #d83b01; }
.spill { overflow: visible; }
.glyph { font-family: "Noto Sans", "Noto Sans CJK JP", sans-serif; }
.heavy { font-weight: 700; }
.collapse { position: absolute; right: 7px; bottom: 3px; display: flex; }

/* Panes */
.main { flex: 1; min-height: 0; display: flex; }
.side {
  width: 311px;
  flex: none;
  display: flex;
  flex-direction: column;
  background: #faf9f8;
  border-right: 1px solid #c8c6c4;
}
.fav { position: relative; height: 46px; flex: none; margin: 0 5px 0 6px; padding: 16px 18px 0; border-bottom: 1px solid #c8c6c4; color: #a19f9d; line-height: 18px; }
.fav button { position: absolute; right: 6px; top: 5px; display: flex; }
.tree { flex: 1; min-height: 0; overflow: hidden; padding: 13px 22px 0 6px; }
.tree a { position: relative; display: flex; align-items: center; height: 24px; padding: 0 12px 0 16px; white-space: nowrap; }
.tree svg { position: absolute; left: 6px; }
.tree .acct { font-size: 14px; color: #252423; }
.tree .acct svg { left: 3px; }
.tree .acct.archive { margin: 40px 0 25px; }
.tree .acct.archive svg { left: 6px; }
.tree .groups { margin-top: 10px; font-weight: 600; }
.tree .sel { font-weight: 700; background: #e1e1e1; color: #252423; }
.tree .sel svg { left: 4px; }
.tree .sub { padding-left: 25px; }
.tree .sub svg { left: 15px; }
.tree b, .tree i { margin-left: auto; font-style: normal; color: #1f66b1; font-size: 12px; }
.tree i { font-size: 11px; }
.modules { flex: none; height: 47px; display: flex; border-top: 1px solid #c8c6c4; }
.modules button { width: 46px; display: grid; place-items: center; }

.list { width: 306px; flex: none; display: flex; flex-direction: column; border-right: 1px solid #c8c6c4; }
.filters { flex: none; height: 43px; display: flex; align-items: flex-start; padding: 15px 36px 0 27px; font-size: 14px; line-height: 24px; color: #605e5c; }
.filters .on { color: #1079c9; border-bottom: 1px solid #106ebe; height: 28px; }
.filters a { margin-right: 19px; }
.filters button { font-size: 11px; line-height: 26px; color: #3b3a39; display: flex; align-items: center; height: 26px; }
.filters .by { margin-left: auto; gap: 5px; }
.filters .dir { margin-left: 16px; }
.scroller { flex: 1; min-height: 0; display: flex; }
.list ul { width: 276px; overflow: hidden; }
.list li {
  height: 84px;
  display: grid;
  grid-template-columns: 1fr auto 9px;
  grid-template-rows: 19px 15px 1fr;
  padding: 11px 24px 0 28px;
}
.list li.tall { height: 88px; }
.list li.sel { background: #e1e1e1; }
.list h3 { grid-row: 1; grid-column: 1; font-size: 14px; line-height: 20px; color: #252423; }
.marks { grid-row: 1; grid-column: 2; display: flex; gap: 8px; margin-right: 10px; }
.cat { grid-row: 1; grid-column: 3; height: 17px; border: 1px solid; }
.teal { background: #58d3db; border-color: #00b7c3; }
.rust { background: #df8e64; border-color: #ca5010; }
.blue { background: #5ca9e5; border-color: #0078d4; }
.subj { grid-row: 2; grid-column: 1; color: #252423; line-height: 13px; white-space: nowrap; }
.list time { grid-row: 2; grid-column: 2 / 4; justify-self: end; color: #252423; line-height: 13px; }
.prev { grid-row: 3; grid-column: 1 / 4; line-height: 13px; color: #605e5c; white-space: pre; }
.tall .prev { line-height: 15px; }
.bar { width: 15px; margin-left: 8px; padding: 2px 0; display: flex; flex-direction: column; background: #f0f0f0; }
.bar button { height: 15px; border: 1px solid #a8a6a4; background: #fff; display: grid; place-items: center; }
.track { flex: 1; padding-top: 502px; }
.thumb { display: block; height: 157px; background: #fff; border: 1px solid #a8a6a4; }

/* Reading pane */
.read { flex: 1; min-width: 0; padding: 16px 24px 0 15px; color: #000; }
.read h1 { font-size: 18px; line-height: 28px; padding-left: 8px; }
.meta { display: flex; padding: 14px 0 0 8px; }
.avatar { position: relative; width: 48px; height: 48px; border-radius: 50%; background: #ca5010; color: #fff; font-size: 16px; line-height: 48px; text-align: center; }
.presence { position: absolute; right: -1px; bottom: -1px; width: 14px; height: 14px; border-radius: 50%; background: #fff; border: 1px solid #9fb8cc; box-shadow: 0 0 0 1px #fff; }
.who { padding: 4px 0 0 11px; color: #3b3a39; }
.from { font-size: 14px; line-height: 22px; }
.to { display: flex; align-items: center; line-height: 16px; }
.to span { color: #605e5c; }
.dot { width: 11px; height: 11px; margin: 0 4px 0 11px; border: 1px solid #9fb8cc; border-radius: 50%; }
.actions { margin: -10px 0 0 auto; text-align: right; color: #605e5c; }
.btns { display: flex; height: 32px; margin-bottom: 4px; color: #3b3a39; }
.btns button { display: flex; align-items: center; gap: 7px; padding: 0 16px 0 12px; border: 1px solid #b3b0ad; }
.btns button + button { border-left: 0; }
.btns button.more { width: 32px; margin-left: 8px; padding: 0; justify-content: center; border-left: 1px solid #b3b0ad; }
.tag { width: 60px; margin: 4px 0 0 8px; padding-left: 6px; border-left: 6px solid #5ca9e5; background: #cde3f7; color: #3b3a39; font-size: 10px; line-height: 17px; }
.body { padding-top: 19px; font-family: Lato, "Noto Sans", sans-serif; font-size: 14px; }
.body p { line-height: 18px; margin-bottom: 19px; }
.body p:nth-child(even) { margin-bottom: 20px; }
.body strong { text-decoration: underline; }
.sig { padding-top: 2px; font: 13px/15px "Liberation Mono", monospace; }
.sig a { color: #00f; text-decoration: underline; }

/* Status bar */
.status { flex: none; height: 22px; display: flex; align-items: center; padding: 0 8px; background: #f3f2f1; border-top: 1px solid #c8c6c4; }
.status span { margin-right: 14px; }
.status .push { margin-left: auto; margin-right: 20px; }
.status .push + span { margin-right: 18px; }
.view { width: 40px; height: 21px; display: grid; place-items: center; }
.view.on { background: #d2d0ce; }
.zoomb { display: flex; margin: 0 5px; }
.status input { width: 100px; height: 14px; margin: 0; appearance: none; background: linear-gradient(#a8a6a4, #a8a6a4) center / 100% 1px no-repeat; }
.status input::-webkit-slider-thumb { appearance: none; width: 5px; height: 12px; background: #797775; }
.status .pct { margin: 0 0 0 6px; }

/* Taskbar */
.taskbar { flex: none; height: 40px; display: flex; background: linear-gradient(90deg, #203a45, #1f303f 60%, #1a2743 90%); color: #fff; }
.start { width: 48px; display: grid; place-items: center; }
.tsearch { width: 344px; display: flex; align-items: center; gap: 10px; padding-left: 12px; background: #f2f2f2; border: 1px solid #bfbfbf; color: #1f1f1f; }
.tsearch input { flex: 1; border: 0; padding: 0; background: none; font-size: 14px; }
.tsearch input::placeholder { color: #2b2b2b; opacity: 1; }
.apps { display: flex; }
.apps button { position: relative; width: 49px; display: grid; place-items: center; }
.run::after { content: ""; position: absolute; left: 5px; right: 4px; bottom: 0; height: 2px; background: #76b9ed; }
.active { background: #4b5f69; }
.active::after { left: 0; right: 0; }
.apps .cx { background: #a56631; box-shadow: inset 0 -2px #ff7a00; }
.tile { font: 700 10px "Noto Sans", sans-serif; fill: #fff; }
.cxt { font: 10px "Noto Sans", sans-serif; fill: #fff; }
.pdf { font: 700 6px "Noto Sans", sans-serif; fill: #fff; }
.tray { margin-left: auto; display: flex; }
.tray button { width: 32px; display: grid; place-items: center; }
.tray time { width: 71px; text-align: center; line-height: 18px; padding-top: 2px; }
.tray .note { position: relative; width: 40px; }
.badge { position: absolute; left: 20px; top: 18px; width: 16px; height: 16px; border-radius: 50%; background: #2b3038; border: 1px solid #7d8592; font-size: 10px; line-height: 14px; }
.desk { width: 1px; margin: 0 4px 0 7px; background: #6a7488; }
```
